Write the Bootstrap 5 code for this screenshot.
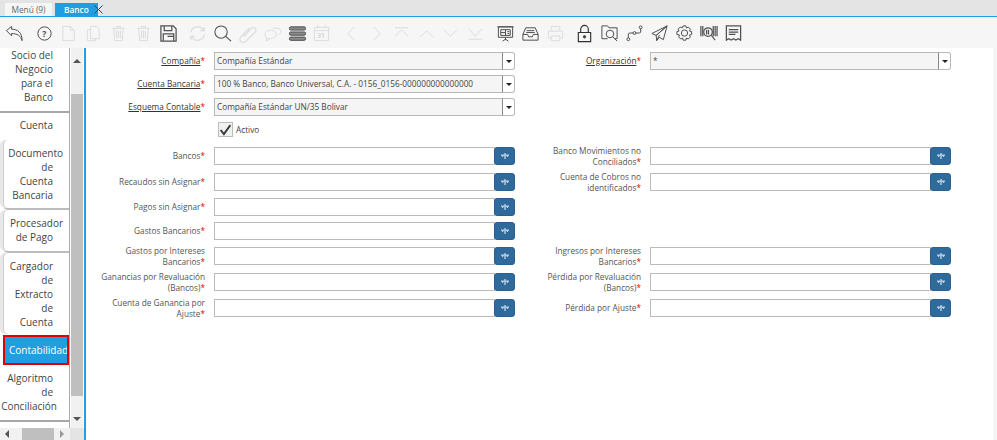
<!DOCTYPE html>
<html lang="es">
<head>
<meta charset="utf-8">
<title>Banco</title>
<link href="https://cdn.jsdelivr.net/npm/bootstrap@5.3.0/dist/css/bootstrap.min.css" rel="stylesheet">
<style>
html,body{height:440px;overflow:hidden;background:#fff;font-family:"Open Sans","Noto Sans",sans-serif;font-size:8.25px;color:#444}
.app-shell{height:440px}
.tabstrip{height:17px;background:#e4e4e4;border-bottom:1px solid #1f9fe6;padding:3px 0 0 5px;gap:3px;flex:none}
.tab-item{height:13px;line-height:13px;font-size:8.3px}
.tab-menu{width:47px;background:#f6f6f6;color:#666;text-align:center}
.tab-banco{width:43px;background:#1f9ee2;color:#fff;font-weight:600;padding-left:9px;position:relative}
.tab-close{position:absolute;left:39px;top:2px;width:9px;height:9px}
.toolbar{height:31px;background:#f6f6f6;padding:1px 0 0 2px;flex:none}
.tool{width:24.8px;height:24px;flex:none;display:flex;align-items:center;justify-content:center}
.tool svg{width:19px;height:19px;fill:none;stroke:#505050;stroke-width:1.05}
.tool.off svg{stroke:#dcdcdc}
.tool .gl{fill:#505050;stroke:none;font:700 9px "Open Sans",sans-serif}
.tool.off .gl{fill:#d8d8d8;font-size:7px}
.grp{margin-left:5px}
.main-area{flex:1;min-height:0}
.side-wrap{width:84px;flex:none}
.side-top{height:380px}
.side-tabs{width:70px;overflow:hidden;background:#fff;border-right:1px solid #aaa;flex:none}
.stab{font-size:10px;line-height:14px;color:#444;text-align:right;background:#fff;padding-right:16px}
.spill{display:inline-block;margin-right:-10px}
.spill-sm{display:inline-block;margin-right:-4px}
.s-socio{padding-bottom:7px;border-bottom:2px solid #a8a8a8}
.s-cuenta{padding-top:5px;padding-bottom:8px}
.s-card{margin-left:3px;border-radius:5px 0 0 5px;border-left:1px solid #ccc;box-shadow:-3px 0 0 #e8e8e8,0 2px 0 #bdbdbd}
.s-doc{padding-top:6px;padding-bottom:6px;margin-bottom:2px}
.s-proc{padding-top:6px;padding-bottom:7px;margin-bottom:2px}
.s-carg{padding-top:6px;padding-bottom:5px;margin-bottom:1px;box-shadow:-3px 0 0 #e8e8e8}
.tab-act{background:#1f9ee2;color:#fff;border:2px solid #e30000;margin-left:3px;height:30px;line-height:26px;text-align:left;padding:0 0 0 4px;white-space:nowrap;overflow:hidden}
.s-algo{padding-top:6px;padding-bottom:7px;border-bottom:2px solid #a8a8a8}
.vbar{width:12px;background:#f1f1f1;flex:none;margin-left:1px;display:flex;flex-direction:column;align-items:center}
.vthumb{width:100%;height:302px;background:#bfbfbf;margin:31px 0 21px}
.arrow-up{width:0;height:0;border:4px solid transparent;border-bottom-color:#555;border-top:0;margin-top:11px}
.arrow-down{width:0;height:0;border:4px solid transparent;border-top-color:#555;border-bottom:0}
.side-bottom{height:12px}
.hbar{width:70px;background:#f1f1f1;display:flex;align-items:center;padding-left:5px;flex:none}
.hthumb{width:32px;height:12px;background:#bfbfbf;margin:0 6px 0 13px}
.arrow-l{width:0;height:0;border:4px solid transparent;border-right-color:#555;border-left:0}
.arrow-r{width:0;height:0;border:4px solid transparent;border-left-color:#999;border-right:0}
.corner{width:14px;background:#e4e4e4;flex:none}
.edge{width:2px;background:#1f9fe6;flex:none}
.form-pane{flex:1;padding-top:4px;min-width:0}
.form-row{padding-left:2px;gap:10px}
.h17{height:23px}.hcheck{height:25px;margin-top:1px}.h18a{height:26px}.h18b{height:25px}.h18c{height:24px}
.field{width:426px;flex:none;gap:9px;display:flex}
.flabel{width:117px;flex:none;padding-left:6px;text-align:right;line-height:10.500px;color:#555;display:block}
.flabel.single{padding-top:4px}
.flabel.dual{margin-top:-2.500px;line-height:11.500px}
.flabel u{color:#333;text-underline-offset:1px}
.req{color:#e00000}
.ctl{width:301px;height:18px;flex:none;display:flex}
.combo-val{flex:1;min-width:0;height:18px;background:#f5f5f5;border:1px solid #b9b9b9;padding:0 2px;line-height:16px;font-size:8.25px;color:#444}
.combo-btn{width:13px;height:18px;background:#fff;border:1px solid #b9b9b9;border-left:1px solid #888;border-radius:0 3px 3px 0;display:flex;align-items:center;justify-content:center;padding:0;margin-left:-1px}
.combo-caret{width:0;height:0;border:3px solid transparent;border-top-color:#222;border-bottom:0}
.look-in{width:281px;height:18px;min-height:18px;border:1px solid #bbb;border-radius:0;padding:0;box-shadow:none}
.look-btn{width:21px;height:18px;padding:0;margin-left:-1px;background:#2f6a9c;border:1px solid #2a6090;border-radius:3px;display:flex;align-items:center;justify-content:center}
.look-btn svg{width:8px;height:7px;fill:#b9cfe2}
.chk-wrap{margin-left:130px;gap:3px;color:#444;font-size:8.25px}
.chk-box{width:15px;height:15px;background:#f1f1f1;border:1px solid #bbb;display:flex;align-items:center;justify-content:center}
.chk-box svg{width:14px;height:14px;fill:none;stroke:#3c3c3c;stroke-width:2.4}
.rscroll{width:4px;background:#f5f5f5;flex:none}
</style>
</head>
<body>
<div class="app-shell d-flex flex-column">
  <div class="tabstrip d-flex">
    <div class="tab-item tab-menu">Menú (9)</div>
    <div class="tab-item tab-banco">Banco
      <svg class="tab-close" viewBox="0 0 9 9"><path d="M.5.500l8 8M8.500.500l-8 8" stroke="#1e4a66" stroke-width="1" fill="none"/></svg>
    </div>
  </div>
  <div class="toolbar d-flex align-items-center">
    <div class="tool"><svg viewBox="0 0 20 20"><path d="M1.500 7L7 2.500v3c6 0 11 3 11 12-1.500-5-5-7.500-11-7.500v2.500z"/></svg></div>
    <div class="tool grp"><svg viewBox="0 0 20 20"><circle cx="10" cy="10" r="7"/><text class="gl" x="7.500" y="13.200">?</text></svg></div>
    <div class="tool off"><svg viewBox="0 0 20 20"><path d="M4 2.500h8l4 4v11H4zM12 2.500v4h4"/></svg></div>
    <div class="tool off"><svg viewBox="0 0 20 20"><path d="M7 2.500h6l3 3v10H7zM7 6H3.500v11.500H12V15.500"/></svg></div>
    <div class="tool off"><svg viewBox="0 0 20 20"><path d="M3.500 4.500h13M8 4.500V2.500h4v2M5 4.500l1 13h8l1-13M8 7v8M10 7v8M12 7v8"/></svg></div>
    <div class="tool off"><svg viewBox="0 0 20 20"><path d="M3.500 4.500h13M8 4.500V2.500h4v2M5 4.500l1 13h8l1-13M8 7v8M10 7v8M12 7v8"/></svg></div>
    <div class="tool"><svg viewBox="0 0 20 20"><path d="M2 2h13l3 3v13H2zM5.500 2v5h8V2M4.500 18v-7.500h11V18M9 13h6" stroke-width="1.300"/></svg></div>
    <div class="tool off grp"><svg viewBox="0 0 20 20"><path d="M3 9a7 7 0 0 1 12-4l2 2M17 3v4h-4M17 11a7 7 0 0 1-12 4l-2-2M3 17v-4h4" stroke-width="1.300"/></svg></div>
    <div class="tool"><svg viewBox="0 0 20 20"><circle cx="8.500" cy="8.500" r="6.500" stroke-width="1.100"/><path d="M13.300 13l5.700 5" stroke-width="1.300"/></svg></div>
    <div class="tool off"><svg viewBox="0 0 20 20"><path d="M6 13L14 4.500a2.800 2.800 0 0 1 4 4L8 18.500a3.500 3.500 0 0 1-5-5l9-9.500" stroke-width="1.300"/></svg></div>
    <div class="tool off"><svg viewBox="0 0 20 20"><ellipse cx="8" cy="11" rx="6" ry="4.500"/><path d="M4 15l-1 3 4-2M10 5a5.500 4 0 0 1 9 3c0 1.500-1 2.500-2 3"/></svg></div>
    <div class="tool"><svg viewBox="0 0 20 20"><rect x="1.500" y="3" width="17" height="3.400" rx="1.500" fill="#8a8a8a"/><rect x="1.500" y="8.400" width="17" height="3.400" rx="1.500" fill="#8a8a8a"/><rect x="1.500" y="13.800" width="17" height="3.400" rx="1.500" fill="#8a8a8a"/></svg></div>
    <div class="tool off"><svg viewBox="0 0 20 20"><path d="M2.500 3.500h15v14h-15zM2.500 7h15M6 1.500v3M14 1.500v3"/><text class="gl" x="5.500" y="15">31</text></svg></div>
    <div class="tool off grp"><svg viewBox="0 0 20 20"><path d="M13 3l-7 7 7 7"/></svg></div>
    <div class="tool off"><svg viewBox="0 0 20 20"><path d="M7 3l7 7-7 7"/></svg></div>
    <div class="tool off"><svg viewBox="0 0 20 20"><path d="M3 4h14M3 13l7-7 7 7"/></svg></div>
    <div class="tool off"><svg viewBox="0 0 20 20"><path d="M3 14l7-7 7 7"/></svg></div>
    <div class="tool off"><svg viewBox="0 0 20 20"><path d="M3 6l7 7 7-7"/></svg></div>
    <div class="tool off"><svg viewBox="0 0 20 20"><path d="M3 5l7 8 7-8M3 16h14"/></svg></div>
    <div class="tool grp"><svg viewBox="0 0 20 20"><path d="M2.500 3h15v11h-15zM1.500 3h17M10 14v3M7 18l3-2 3 2M5 6h10v6H5zM10 6v6M5 9h5M12 8h2M12 10h2"/></svg></div>
    <div class="tool"><svg viewBox="0 0 20 20"><path d="M5 4h10l3 7v6H2v-6zM2 11h5l1 2.500h4l1-2.500h5M6 7h8M5.500 9h9"/></svg></div>
    <div class="tool off"><svg viewBox="0 0 20 20"><path d="M5.500 7V2.500h9V7M5 15H2.500V7.500h15V15H15M5.500 12.500h9v5h-9z"/></svg></div>
    <div class="tool grp"><svg viewBox="0 0 20 20"><path d="M3.500 9h13v9.500h-13zM6 9V5.500a4 4 0 0 1 8 0V9" stroke="#303030" stroke-width="1.200"/><circle cx="10" cy="13.500" r="1.300" fill="#3e3e3e"/></svg></div>
    <div class="tool"><svg viewBox="0 0 20 20"><path d="M2 2h6l1.500 2H18v11.500h-3M2 2v13.500h6"/><circle cx="10.500" cy="10.500" r="4"/><path d="M13.500 13.500l4.500 4.500"/></svg></div>
    <div class="tool"><svg viewBox="0 0 20 20"><circle cx="3.500" cy="16" r="1.500"/><circle cx="10" cy="9.500" r="1.500"/><circle cx="16.500" cy="3.500" r="1.500"/><path d="M3.500 14.500V10.500l1-1H8.500M11.500 9.500h4l1-1V5"/></svg></div>
    <div class="tool"><svg viewBox="0 0 20 20"><path d="M18 2L2 10l4.500 2zM18 2L6.500 12 7 17.500l3-3.500 4 2.500zM7 17.500l3-6"/></svg></div>
    <div class="tool"><svg viewBox="0 0 20 20"><path d="M8.500 2h3l.5 2.200 2-1 2.200 2.200-1 2 2.300.6v3l-2.300.6 1 2-2.200 2.200-2-1-.5 2.200h-3l-.5-2.200-2 1-2.200-2.200 1-2L2 11V8l2.300-.6-1-2L5.500 3.200l2 1z"/><circle cx="10" cy="9.500" r="3.300"/></svg></div>
    <div class="tool"><svg viewBox="0 0 20 20"><path d="M2 2v11M4 2v11M15 2v11M17 2v11M19 2v11" stroke-width="1.300"/><circle cx="9.500" cy="8.500" r="4.500" stroke-width="1.300"/><path d="M8 6v5M10 6v5" stroke-width="1.300"/><path d="M13 12l4 5" stroke-width="1.200"/></svg></div>
    <div class="tool"><svg viewBox="0 0 20 20"><path d="M2.500 2h15v15l-2.500-1.500-2.500 1.500-2.500-1.500-2.500 1.500-2.500-1.500-2.500 1.500z" stroke-width="1.300"/><path d="M5 6h10M5 8.500h10M5 11h7" stroke-width="1.300"/></svg></div>
  </div>
  <div class="main-area d-flex">
    <div class="side-wrap d-flex flex-column">
      <div class="side-top d-flex">
        <div class="side-tabs">
          <div class="stab s-socio">Socio del<br>Negocio<br>para el<br>Banco</div>
          <div class="stab s-cuenta">Cuenta</div>
          <div class="stab s-card s-doc"><span class="spill">Documento</span><br>de<br>Cuenta<br>Bancaria</div>
          <div class="stab s-card s-proc"><span class="spill">Procesador</span><br>de Pago</div>
          <div class="stab s-card s-carg">Cargador<br>de<br>Extracto<br>de<br>Cuenta</div>
          <div class="stab tab-act">Contabilidad</div>
          <div class="stab s-algo">Algoritmo<br>de<br><span class="spill-sm">Conciliación</span></div>
        </div>
        <div class="vbar"><div class="arrow-up"></div><div class="vthumb"></div><div class="arrow-down"></div></div>
      </div>
      <div class="side-bottom d-flex">
        <div class="hbar"><div class="arrow-l"></div><div class="hthumb"></div><div class="arrow-r"></div></div>
        <div class="corner"></div>
      </div>
    </div>
    <div class="edge"></div>
    <div class="form-pane d-flex flex-column">
      <div class="form-row d-flex h17">
        <div class="field"><label class="flabel single"><u>Compañía</u><span class="req">*</span></label><div class="ctl"><div class="combo-val">Compañía Estándar</div><button class="combo-btn" type="button"><span class="combo-caret"></span></button></div></div>
        <div class="field"><label class="flabel single"><u>Organización</u><span class="req">*</span></label><div class="ctl"><div class="combo-val">*</div><button class="combo-btn" type="button"><span class="combo-caret"></span></button></div></div>
      </div>
      <div class="form-row d-flex h17">
        <div class="field"><label class="flabel single"><u>Cuenta Bancaria</u><span class="req">*</span></label><div class="ctl"><div class="combo-val">100 % Banco, Banco Universal, C.A. - 0156_0156-000000000000000</div><button class="combo-btn" type="button"><span class="combo-caret"></span></button></div></div>
      </div>
      <div class="form-row d-flex h17">
        <div class="field"><label class="flabel single"><u>Esquema Contable</u><span class="req">*</span></label><div class="ctl"><div class="combo-val">Compañía Estándar UN/35 Bolivar</div><button class="combo-btn" type="button"><span class="combo-caret"></span></button></div></div>
      </div>
      <div class="form-row d-flex hcheck">
        <div class="chk-wrap d-flex align-items-start"><div class="chk-box"><svg viewBox="0 0 16 16"><path d="M2 8l4 5 8-11"/></svg></div><span class="pt-1">Activo</span></div>
      </div>
      <div class="form-row d-flex h18a">
        <div class="field"><label class="flabel single">Bancos<span class="req">*</span></label><div class="ctl"><input class="form-control look-in" type="text"><button class="btn look-btn" type="button"><svg viewBox="0 0 8 7"><path d="M3.300 0h1.400v6H3.300zM0 1.500h8v1.200H7.500L6.800 4H6L5.300 2.700H2.700L2 4h-.8L.5 2.700H0z"/></svg></button></div></div>
        <div class="field"><label class="flabel dual">Banco Movimientos no Conciliados<span class="req">*</span></label><div class="ctl"><input class="form-control look-in" type="text"><button class="btn look-btn" type="button"><svg viewBox="0 0 8 7"><path d="M3.300 0h1.400v6H3.300zM0 1.500h8v1.200H7.500L6.800 4H6L5.300 2.700H2.700L2 4h-.8L.5 2.700H0z"/></svg></button></div></div>
      </div>
      <div class="form-row d-flex h18b">
        <div class="field"><label class="flabel single">Recaudos sin Asignar<span class="req">*</span></label><div class="ctl"><input class="form-control look-in" type="text"><button class="btn look-btn" type="button"><svg viewBox="0 0 8 7"><path d="M3.300 0h1.400v6H3.300zM0 1.500h8v1.200H7.500L6.800 4H6L5.300 2.700H2.700L2 4h-.8L.5 2.700H0z"/></svg></button></div></div>
        <div class="field"><label class="flabel dual">Cuenta de Cobros no identificados<span class="req">*</span></label><div class="ctl"><input class="form-control look-in" type="text"><button class="btn look-btn" type="button"><svg viewBox="0 0 8 7"><path d="M3.300 0h1.400v6H3.300zM0 1.500h8v1.200H7.500L6.800 4H6L5.300 2.700H2.700L2 4h-.8L.5 2.700H0z"/></svg></button></div></div>
      </div>
      <div class="form-row d-flex h18c">
        <div class="field"><label class="flabel single">Pagos sin Asignar<span class="req">*</span></label><div class="ctl"><input class="form-control look-in" type="text"><button class="btn look-btn" type="button"><svg viewBox="0 0 8 7"><path d="M3.300 0h1.400v6H3.300zM0 1.500h8v1.200H7.500L6.800 4H6L5.300 2.700H2.700L2 4h-.8L.5 2.700H0z"/></svg></button></div></div>
      </div>
      <div class="form-row d-flex h18b">
        <div class="field"><label class="flabel single">Gastos Bancarios<span class="req">*</span></label><div class="ctl"><input class="form-control look-in" type="text"><button class="btn look-btn" type="button"><svg viewBox="0 0 8 7"><path d="M3.300 0h1.400v6H3.300zM0 1.500h8v1.200H7.500L6.800 4H6L5.300 2.700H2.700L2 4h-.8L.5 2.700H0z"/></svg></button></div></div>
      </div>
      <div class="form-row d-flex h18a">
        <div class="field"><label class="flabel dual">Gastos por Intereses Bancarios<span class="req">*</span></label><div class="ctl"><input class="form-control look-in" type="text"><button class="btn look-btn" type="button"><svg viewBox="0 0 8 7"><path d="M3.300 0h1.400v6H3.300zM0 1.500h8v1.200H7.500L6.800 4H6L5.300 2.700H2.700L2 4h-.8L.5 2.700H0z"/></svg></button></div></div>
        <div class="field"><label class="flabel dual">Ingresos por Intereses Bancarios<span class="req">*</span></label><div class="ctl"><input class="form-control look-in" type="text"><button class="btn look-btn" type="button"><svg viewBox="0 0 8 7"><path d="M3.300 0h1.400v6H3.300zM0 1.500h8v1.200H7.500L6.800 4H6L5.300 2.700H2.700L2 4h-.8L.5 2.700H0z"/></svg></button></div></div>
      </div>
      <div class="form-row d-flex h18a">
        <div class="field"><label class="flabel dual">Ganancias por Revaluación (Bancos)<span class="req">*</span></label><div class="ctl"><input class="form-control look-in" type="text"><button class="btn look-btn" type="button"><svg viewBox="0 0 8 7"><path d="M3.300 0h1.400v6H3.300zM0 1.500h8v1.200H7.500L6.800 4H6L5.300 2.700H2.700L2 4h-.8L.5 2.700H0z"/></svg></button></div></div>
        <div class="field"><label class="flabel dual">Pérdida por Revaluación (Bancos)<span class="req">*</span></label><div class="ctl"><input class="form-control look-in" type="text"><button class="btn look-btn" type="button"><svg viewBox="0 0 8 7"><path d="M3.300 0h1.400v6H3.300zM0 1.500h8v1.200H7.500L6.800 4H6L5.300 2.700H2.700L2 4h-.8L.5 2.700H0z"/></svg></button></div></div>
      </div>
      <div class="form-row d-flex h18a">
        <div class="field"><label class="flabel dual">Cuenta de Ganancia por Ajuste<span class="req">*</span></label><div class="ctl"><input class="form-control look-in" type="text"><button class="btn look-btn" type="button"><svg viewBox="0 0 8 7"><path d="M3.300 0h1.400v6H3.300zM0 1.500h8v1.200H7.500L6.800 4H6L5.300 2.700H2.700L2 4h-.8L.5 2.700H0z"/></svg></button></div></div>
        <div class="field"><label class="flabel single">Pérdida por Ajuste<span class="req">*</span></label><div class="ctl"><input class="form-control look-in" type="text"><button class="btn look-btn" type="button"><svg viewBox="0 0 8 7"><path d="M3.300 0h1.400v6H3.300zM0 1.500h8v1.200H7.500L6.800 4H6L5.300 2.700H2.700L2 4h-.8L.5 2.700H0z"/></svg></button></div></div>
      </div>
    </div>
    <div class="rscroll"></div>
  </div>
</div>
<script src="https://cdn.jsdelivr.net/npm/bootstrap@5.3.0/dist/js/bootstrap.bundle.min.js"></script>
</body>
</html>
